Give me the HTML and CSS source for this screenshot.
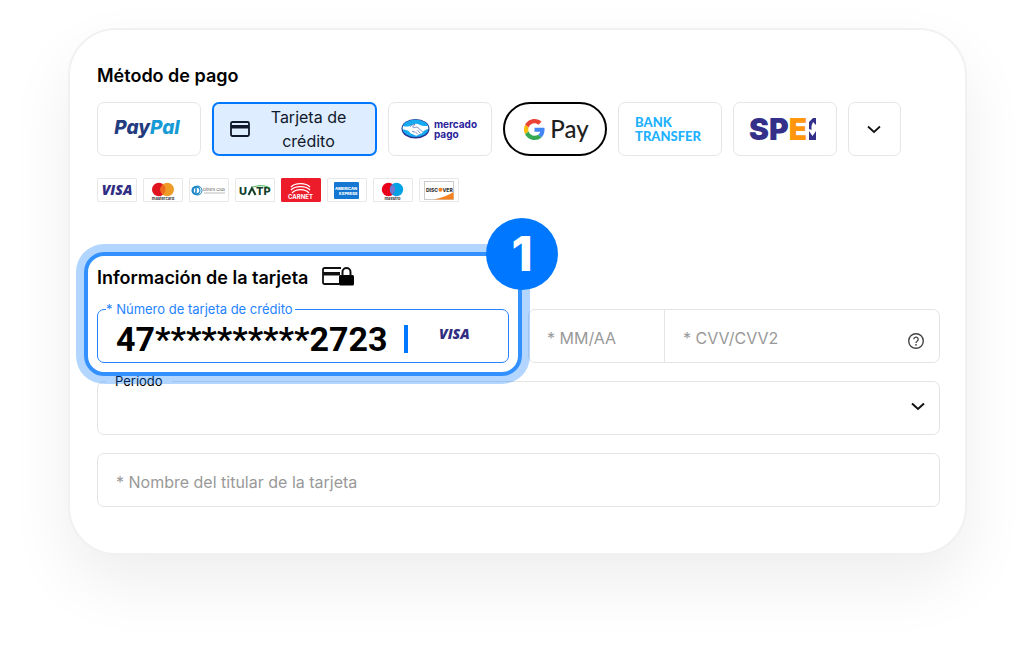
FILE: index.html
```html
<!DOCTYPE html>
<html lang="es">
<head>
<meta charset="utf-8">
<meta name="viewport" content="width=device-width, initial-scale=1">
<title>Método de pago</title>
<link rel="stylesheet" href="styles.css">
</head>
<body>
<form class="panel">
  <h2 class="title">Método de pago</h2>
  <div class="methods">
    <button type="button" class="tile paypal"><span><span class="pay">Pay</span><span class="pal">Pal</span></span></button>
    <button type="button" class="tile tile-selected" aria-pressed="true">
      <svg width="20" height="16" viewBox="0 0 20 16" aria-hidden="true"><rect x="1" y="1" width="18" height="14" rx="1.5" fill="none" stroke="#10192b" stroke-width="1.8"/><rect x="1" y="4" width="18" height="3.5" fill="#10192b"/></svg>
      <span class="tile-label">Tarjeta de crédito</span>
    </button>
    <button type="button" class="tile mercado">
      <svg width="29" height="22" viewBox="0 0 29 22" aria-hidden="true">
        <ellipse cx="14.5" cy="10.8" rx="14" ry="9.8" fill="#2b2f91"/>
        <ellipse cx="14.5" cy="10.3" rx="13" ry="8.8" fill="#16aaf0"/>
        <path d="M2 8C6 9.500 9 8 12 6.500C14 5.500 16 5.500 18 6.500C21 8 24 8.500 27 7.800L27.300 11C24.500 11.500 23 12.500 22 14C21 15.500 19.500 16 18 16.500C16.500 18 14 18 12.500 16.500C10.500 16 9 15 8 13.500C6 12 4 11.500 1.700 11.500Z" fill="#fff"/>
        <path d="M9 8.500C10 7.500 13 6 14 6.500L11.500 9C13 10.500 14.500 9 16 9L22 14M11 13.500C12.500 12.500 13.500 14 13 15M14 13.500L17 16.500M16.500 12L19.500 15.500" fill="none" stroke="#4c63ad" stroke-width=".7"/>
      </svg>
      <span class="stack"><span>mercado</span><span>pago</span></span>
    </button>
    <button type="button" class="tile gpay">
      <svg width="21" height="21" viewBox="0 0 48 48" aria-hidden="true">
        <path fill="#EA4335" d="M24 9.500c3.540 0 6.710 1.220 9.210 3.600l6.850-6.850C35.900 2.380 30.470 0 24 0 14.620 0 6.510 5.380 2.560 13.220l7.980 6.190C12.430 13.720 17.740 9.500 24 9.500z"/>
        <path fill="#4285F4" d="M46.980 24.550c0-1.570-.15-3.090-.38-4.550H24v9.020h12.940c-.58 2.960-2.260 5.480-4.780 7.180l7.730 6c4.510-4.180 7.090-10.360 7.090-17.650z"/>
        <path fill="#FBBC05" d="M10.530 28.590A14.500 14.500 0 0 1 9.770 24c0-1.600.27-3.140.76-4.590l-7.980-6.190A23.900 23.900 0 0 0 0 24c0 3.880.92 7.540 2.560 10.780z"/>
        <path fill="#34A853" d="M24 48c6.480 0 11.930-2.130 15.890-5.810l-7.730-6c-2.150 1.450-4.920 2.300-8.160 2.300-6.260 0-11.570-4.220-13.470-9.910l-7.980 6.190C6.510 42.620 14.620 48 24 48z"/>
      </svg>
      <span>Pay</span>
    </button>
    <button type="button" class="tile bank"><span class="stack"><span>BANK</span><span>TRANSFER</span></span></button>
    <button type="button" class="tile spei" aria-label="SPEI">
      <span>SP<span class="spei-e">E</span></span>
      <svg width="7" height="22" viewBox="0 0 7 22" aria-hidden="true"><path fill="#34308a" d="M0 0H7V22H0Z"/><path fill="#fff" d="M0 0H4L0 4ZM4 4L7 7V13L3.500 18L0 13V11L2.500 12V8Z"/></svg>
    </button>
    <button type="button" class="tile tile-more" aria-label="Más métodos">
      <svg width="14" height="9" viewBox="0 0 14 9" aria-hidden="true"><path d="M1 1.500L7 7L13 1.500" fill="none" stroke="#111" stroke-width="1.700"/></svg>
    </button>
  </div>

  <div class="brands">
    <span class="brand visa">VISA</span>
    <span class="brand"><svg width="38" height="22" viewBox="0 0 38 22" role="img" aria-label="Mastercard"><circle cx="14.800" cy="10.500" r="6.800" fill="#e0141f"/><circle cx="23.200" cy="10.500" r="6.800" fill="#ee9c25"/><path d="M19 5.200a6.800 6.800 0 0 1 0 10.600a6.800 6.800 0 0 1 0-10.600z" fill="#ed671d"/><text x="19" y="21" text-anchor="middle" font-size="4" font-weight="700" fill="#333">mastercard</text></svg></span>
    <span class="brand"><svg width="38" height="22" viewBox="0 0 38 22" role="img" aria-label="Diners Club"><circle cx="6" cy="11.500" r="4.500" fill="#1784c7"/><circle cx="7.500" cy="11.500" r="4.500" fill="none" stroke="#1784c7"/><circle cx="6.500" cy="11.500" r="2.800" fill="#fff"/><path d="M6 9v5" stroke="#1784c7" stroke-width="1.500"/><text x="13" y="12" font-size="4" fill="#555">Diners Club</text><path d="M14 14h21" stroke="#aaa" stroke-width=".8"/></svg></span>
    <span class="brand"><svg width="38" height="22" viewBox="0 0 38 22" role="img" aria-label="UATP"><text x="3" y="16" font-size="11" font-weight="800" fill="#153f2b">U</text><path d="M12.500 16L16 9L19.500 16" fill="none" stroke="#153f2b" stroke-width="2"/><text x="20" y="16" font-size="11" font-weight="800" fill="#153f2b">TP</text><path d="M16 8.500C22 6 29 6 34 9" fill="none" stroke="#43aa50"/></svg></span>
    <span class="brand brand-carnet"><svg width="38" height="22" viewBox="0 0 38 22" role="img" aria-label="Carnet"><path d="M9 8C13 3.500 24 3.500 28 8M9 11C13 6.500 24 6.500 28 11M10 14C14 9.500 23 9.500 27 14" fill="none" stroke="#fff" stroke-width="1.300"/><text x="18.500" y="20.300" text-anchor="middle" font-size="6" font-weight="700" fill="#fff">CARNET</text></svg></span>
    <span class="brand"><svg width="38" height="22" viewBox="0 0 38 22" role="img" aria-label="American Express"><rect x="6" y="3" width="25" height="17" rx="1" fill="#1677d2"/><text x="7" y="11" font-size="4" font-weight="800" fill="#fff">AMERICAN</text><text x="11" y="16" font-size="4" font-weight="800" fill="#fff">EXPRESS</text></svg></span>
    <span class="brand"><svg width="38" height="22" viewBox="0 0 38 22" role="img" aria-label="Maestro"><circle cx="14.500" cy="10.500" r="6.700" fill="#eb001b"/><circle cx="22.500" cy="10.500" r="6.700" fill="#00a2e5"/><path d="M18.500 5.200a6.700 6.700 0 0 1 0 10.600a6.700 6.700 0 0 1 0-10.600z" fill="#7375cf"/><text x="18.500" y="21" text-anchor="middle" font-size="4" font-weight="700" fill="#333">maestro</text></svg></span>
    <span class="brand"><svg width="38" height="22" viewBox="0 0 38 22" role="img" aria-label="Discover"><rect x="4.500" y="2.500" width="29" height="18" fill="#fff" stroke="#ccc"/><path d="M14 20.500Q26 18 33.500 13V20.500Z" fill="#f58220"/><text x="6" y="12.500" font-size="5" font-weight="800" fill="#333">DISC</text><circle cx="20.400" cy="10.800" r="2" fill="#f58220"/><text x="22.500" y="12.500" font-size="5" font-weight="800" fill="#333">VER</text></svg></span>
  </div>

  <div class="card-row">
    <section class="card-number">
      <h2 class="title title-card">Información de la tarjeta
        <svg width="33" height="19" viewBox="0 0 33 19" aria-hidden="true"><path d="M17 17H2.500a1.500 1.500 0 0 1-1.500-1.500V2.500A1.500 1.500 0 0 1 2.500 1H19" fill="none" stroke="#111" stroke-width="1.800"/><path d="M1 5H18V8.500H1Z" fill="#111"/><rect x="17" y="8" width="15" height="10.500" rx="1.500" fill="#000"/><path d="M20.500 9V5a4 4 0 0 1 8 0V9" fill="none" stroke="#111" stroke-width="2"/></svg>
      </h2>
      <div class="field field-active">
        <label class="float float-active" for="number">* Número de tarjeta de crédito</label>
        <input id="number" class="input number" type="text" value="47**********2723">
        <span class="caret"></span>
        <span class="visa visa-field">VISA</span>
      </div>
      <div class="highlight"></div>
      <span class="step">1</span>
    </section>
    <div class="field pair">
      <input class="input expiry" type="text" placeholder="* MM/AA" aria-label="MM/AA">
      <div class="cvv">
        <input class="input" type="text" placeholder="* CVV/CVV2" aria-label="CVV/CVV2">
        <svg class="help" width="18" height="18" viewBox="0 0 18 18" aria-hidden="true"><circle cx="9" cy="9" r="7.300" fill="none" stroke="#444" stroke-width="1.400"/><path d="M6.800 7.300a2.200 2.200 0 1 1 3.300 1.900c-.8.450-1.100.8-1.100 1.700" fill="none" stroke="#444" stroke-width="1.300"/><circle cx="9" cy="12.800" r=".9" fill="#444"/></svg>
      </div>
    </div>
  </div>

  <div class="field">
    <label class="float float-period" for="period">Período</label>
    <select id="period" class="input period"><option></option></select>
    <svg class="arrow" width="14" height="9" viewBox="0 0 14 9" aria-hidden="true"><path d="M1 1.500L7 7L13 1.500" fill="none" stroke="#111" stroke-width="2"/></svg>
  </div>
  <div class="field">
    <input class="input" type="text" placeholder="* Nombre del titular de la tarjeta" aria-label="Nombre del titular de la tarjeta">
  </div>
</form>
</body>
</html>
```
FILE: styles.css
```css
* { box-sizing: border-box; }
body {
  margin: 0;
  padding: 28px 69px 109px 68px;
  background: #fff;
  color: #000;
  font-family: Inter, sans-serif;
}
button, input, select { font: inherit; color: inherit; }
svg { flex: none; display: block; }

.panel {
  display: flex;
  flex-direction: column;
  gap: 18px;
  padding: 34px 25px 46px 27px;
  border: 2px solid #f1f1f1;
  border-radius: 48px;
  background: #fff;
  box-shadow: 0 28px 64px rgba(0, 0, 0, 0.07);
}
.title {
  margin: 0;
  font-size: 18px;
  font-weight: 600;
  line-height: 24px;
}
.methods {
  display: flex;
  flex-wrap: wrap;
  gap: 11px;
  margin-top: -4px;
}
.tile {
  display: flex;
  align-items: center;
  justify-content: center;
  width: 104px;
  height: 54px;
  padding: 0;
  border: 1px solid #e6e6e6;
  border-radius: 7px;
  background: #fff;
}
.tile-selected {
  justify-content: flex-start;
  width: 165px;
  padding: 0 16px;
  border: 2px solid #0077ff;
  background: #deedff;
  color: #10192b;
  font-size: 16px;
  line-height: 24px;
}
.tile-label { flex: 1; padding-left: 8px; }
.tile-more { width: 53px; padding-right: 2px; }
.stack { display: grid; }
.paypal {
  padding: 0 4px 3px 0;
  font-size: 19px;
  font-style: italic;
  font-weight: 800;
  line-height: 24px;
}
.pay { color: #253b80; }
.pal { color: #179bd7; }
.mercado {
  gap: 4px;
  padding-right: 2px;
  color: #29229a;
  font-size: 10px;
  font-weight: 700;
  line-height: 10px;
  text-align: left;
}
.gpay {
  gap: 5px;
  padding-left: 3px;
  border: 2px solid #000;
  border-radius: 27px;
  color: #1f1f1f;
  font: 500 24px/28px Lato, sans-serif;
}
.bank {
  padding-right: 4px;
  color: #1eb1ff;
  font: 900 13px/14px Lato, sans-serif;
  text-align: left;
}
.spei {
  gap: 2px;
  padding-right: 5px;
  color: #34308a;
  font-size: 30px;
  font-weight: 900;
}
.spei-e { color: #ff960c; }

.brands {
  display: flex;
  flex-wrap: wrap;
  gap: 6px;
  margin-top: 4px;
}
.brand {
  display: flex;
  align-items: center;
  justify-content: center;
  width: 40px;
  height: 24px;
  border: 1px solid #e8e8e8;
  border-radius: 1px;
  background: #fff;
}
.brand-carnet { border-color: #ed1c2b; background: #ed1c2b; }
.visa {
  color: #302d83;
  font: italic 800 14px/20px "Open Sans", sans-serif;
}

.card-row {
  display: grid;
  grid-template-columns: 1fr 1fr;
  align-items: end;
  gap: 19px;
  margin-top: 46px;
}
.card-number {
  position: relative;
  display: grid;
  gap: 19px;
}
.title-card {
  display: flex;
  align-items: center;
  gap: 14px;
}
.title-card svg { margin-bottom: 4px; }
.field {
  position: relative;
  display: flex;
  align-items: center;
  height: 54px;
  border: 1px solid #e4e4e4;
  border-radius: 7px;
  background: #fff;
}
.field-active { border-color: #2583ff; }
.input {
  width: 100%;
  min-width: 0;
  height: 100%;
  padding: 4px 18px 0;
  border: 0;
  outline: 0;
  background: transparent;
  font-size: 16px;
}
.input::placeholder { color: #999; opacity: 1; }
.float {
  position: absolute;
  top: -10px;
  left: 8px;
  background: #fff;
  font-size: 13px;
  line-height: 18px;
}
.float-active { padding-right: 2px; color: #2583ff; }
.float-period { padding: 0 9px; }
.number {
  width: 306px;
  padding: 5px 0 0 18px;
  font-family: Roboto, sans-serif;
  font-size: 34px;
  font-weight: 700;
}
.caret {
  width: 4px;
  height: 28px;
  margin-top: 6px;
  background: #0077ff;
}
.visa-field { margin: 0 auto 4px 31px; }
.expiry { width: 135px; }
.cvv {
  display: flex;
  flex: 1;
  align-items: center;
  height: 100%;
  border-left: 1px solid #e4e4e4;
}
.help { margin: 10px 14px 0 0; }
.period { appearance: none; }
.arrow {
  position: absolute;
  right: 14px;
  margin-bottom: 4px;
  pointer-events: none;
}
.highlight {
  position: absolute;
  z-index: 1;
  inset: -14px -13px -13px;
  border: 4px solid #3391ff;
  border-radius: 20px;
  box-shadow: 0 0 0 8px rgba(0, 119, 255, 0.3);
  pointer-events: none;
}
.step {
  position: absolute;
  z-index: 2;
  top: -48px;
  right: -49px;
  display: grid;
  place-items: center;
  width: 72px;
  height: 72px;
  border-radius: 50%;
  background: #0077ff;
  color: #fff;
  font-size: 48px;
  font-weight: 800;
  line-height: 72px;
}
```
